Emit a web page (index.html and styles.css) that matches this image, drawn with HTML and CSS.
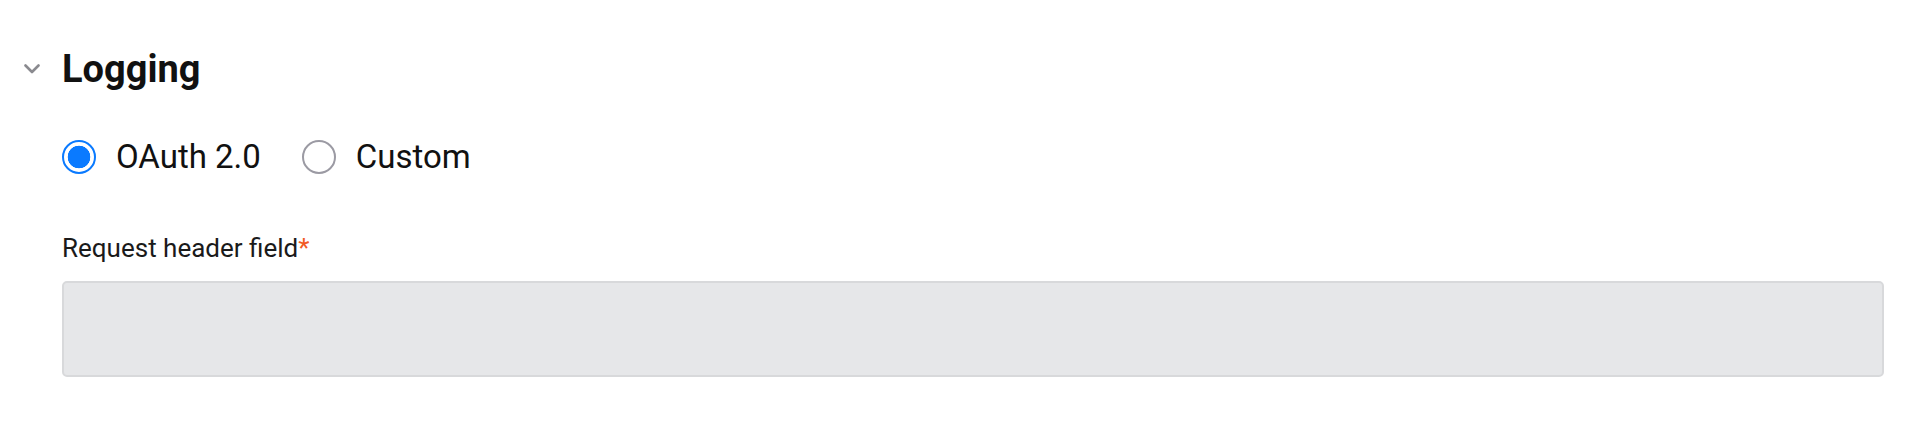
FILE: index.html
```html
<!DOCTYPE html>
<html lang="en">
<head>
    <meta charset="UTF-8">
    <meta name="viewport" content="width=device-width, initial-scale=1.0">
    <title>Logging</title>

    <link rel="stylesheet" href="styles.css">
</head>
<body>
    <section class="panel">
        <div class="panel-head">
            <span class="toggle">
                <svg width="16" height="10" viewBox="0 0 16 10">
                    <path d="M1.5 1.5 L8 8 L14.5 1.5" fill="none" stroke="#8a8a8f" stroke-width="2.6" stroke-linecap="round" stroke-linejoin="round"/>
                </svg>
            </span>
            <h2>Logging</h2>
        </div>

        <div class="panel-body">
            <div class="auth-options">
                <label class="option">
                    <input type="radio" name="auth" value="oauth" checked>
                    <span>OAuth 2.0</span>
                </label>
                <label class="option">
                    <input type="radio" name="auth" value="custom">
                    <span>Custom</span>
                </label>
            </div>

            <div class="field">
                <label for="headerField">Request header field<span class="req">*</span></label>
                <input type="text" id="headerField" name="headerField">
            </div>
        </div>
    </section>
</body>
</html>
```

FILE: styles.css
```css
*{
    margin: 0;
    padding: 0;
    box-sizing: border-box;
}

body{
    font-family: Roboto, "Liberation Sans", sans-serif;
    color: #111;
    background: #fff;
}

.panel{
    padding: 47px 40px 0 0;
}

.panel-head{
    display: flex;
    align-items: center;
    height: 44px;
}

.toggle{
    width: 62px;
    padding-left: 24px;
    display: flex;
    align-items: center;
}

.panel-head h2{
    font-size: 38px;
    font-weight: 700;
    line-height: 44px;
    color: #111;
}

.panel-body{
    padding-left: 62px;
}

.auth-options{
    display: flex;
    align-items: center;
    gap: 41px;
    margin-top: 46px;
    height: 40px;
}

.option{
    display: flex;
    align-items: center;
    gap: 20px;
    font-size: 33px;
    line-height: 40px;
    cursor: pointer;
}

.option input[type="radio"]{
    appearance: none;
    width: 34px;
    height: 34px;
    border: 2px solid #9b9aa3;
    border-radius: 50%;
    background: #fff;
    margin: 0;
}

.option input[type="radio"]:checked{
    border-color: #0a7aff;
    background: radial-gradient(circle, #0a7aff 0 11px, #fff 11.6px);
}

.field{
    margin-top: 55px;
    display: flex;
    flex-direction: column;
}

.field label{
    font-size: 26px;
    line-height: 32px;
    color: #1a1a1a;
}

.field .req{
    color: #f15a24;
}

.field input{
    margin-top: 17px;
    height: 96px;
    width: 100%;
    border: 2px solid #d8d9db;
    border-radius: 5px;
    background: #e6e7e9;
    font-size: 26px;
    padding: 0 16px;
    outline: none;
}
```
